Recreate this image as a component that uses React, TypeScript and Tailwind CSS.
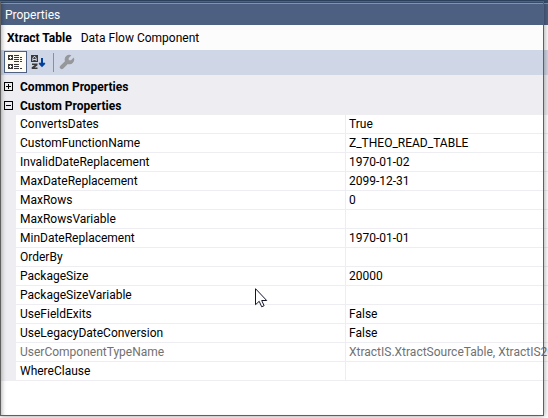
import React, { useState } from "react";

type Property = { name: string; value: string; readOnly?: boolean };

const properties: Property[] = [
  { name: "ConvertsDates", value: "True" },
  { name: "CustomFunctionName", value: "Z_THEO_READ_TABLE" },
  { name: "InvalidDateReplacement", value: "1970-01-02" },
  { name: "MaxDateReplacement", value: "2099-12-31" },
  { name: "MaxRows", value: "0" },
  { name: "MaxRowsVariable", value: "" },
  { name: "MinDateReplacement", value: "1970-01-01" },
  { name: "OrderBy", value: "" },
  { name: "PackageSize", value: "20000" },
  { name: "PackageSizeVariable", value: "" },
  { name: "UseFieldExits", value: "False" },
  { name: "UseLegacyDateConversion", value: "False" },
  { name: "UserComponentTypeName", value: "XtractIS.XtractSourceTable, XtractIS201", readOnly: true },
  { name: "WhereClause", value: "" },
];

function CategorizedIcon() {
  return (
    <svg width="16" height="16" viewBox="0 0 16 16" shapeRendering="crispEdges" aria-hidden="true">
      <path fill="#3b3a3a" d="M1 1h5v5H1zM1 10h5v5H1zM7 1h5v1H7zM7 3h5v1H7zM7 5h5v1H7zM7 7h5v1H7zM7 10h5v1H7zM7 12h5v1H7zM7 14h5v1H7zM13 3h2v1h-2zM13 5h2v1h-2zM13 7h2v1h-2zM13 14h2v1h-2z" />
      <path fill="#fffcf4" d="M3 2h1v1h1v1H4v1H3V4H2V3h1zM3 11h1v1h1v1H4v1H3v-1H2v-1h1z" />
    </svg>
  );
}

function AlphabeticalIcon() {
  return (
    <svg width="16" height="16" viewBox="0 0 16 16" aria-hidden="true">
      <path fill="#3b3a3a" d="M1 1h7v7H1z" />
      <path fill="none" stroke="#cfd6e5" d="M2.8 7V4.2L4 2.5h1L6.2 4.2V7M3 5.5h3" />
      <path fill="#3b3a3a" d="M2 9.5h5.5v1.8L4.6 13.4h2.9V15H1.7v-1.7l3-2.2H2z" />
      <path fill="none" stroke="#003f9c" strokeWidth="2" d="M12 4v8M9.3 9L12 11.8 14.7 9" />
    </svg>
  );
}

function WrenchIcon() {
  return (
    <svg width="16" height="16" viewBox="0 0 16 16" aria-hidden="true">
      <path fill="#96979b" d="M12.4 1.3A4.7 4.7 0 0 0 6 7.2L1.4 11.7a1.9 1.9 0 0 0 2.9 2.9L8.8 10a4.7 4.7 0 0 0 5.9-6.4L12 6.3 9.8 6.2 9.7 4z" />
    </svg>
  );
}

function Category({ label, open, onToggle }: { label: string; open: boolean; onToggle: () => void }) {
  return (
    <button
      type="button"
      aria-expanded={open}
      onClick={onToggle}
      className="flex h-[19px] w-full items-center gap-[7px] pl-1 text-left font-bold"
    >
      <svg width="9" height="9" viewBox="0 0 9 9" shapeRendering="crispEdges" aria-hidden="true">
        <path fill="none" stroke="#000" d={open ? "M.5.5h8v8h-8zM2 4.5h5" : "M.5.5h8v8h-8zM2 4.5h5M4.5 2v5"} />
      </svg>
      {label}
    </button>
  );
}

export default function App() {
  const [commonOpen, setCommonOpen] = useState(false);
  const [customOpen, setCustomOpen] = useState(true);

  return (
    <main className="relative min-h-screen overflow-hidden bg-white font-[Roboto,'Open_Sans',sans-serif] text-xs leading-4 text-black">
      <header className="border-t-3 border-[#364e6f] bg-[#4d6082] text-white">
        <h1 className="flex h-[22px] items-center border-t border-[#8592b0] pl-[5px]">Properties</h1>
      </header>
      <div className="flex h-[25px] items-center gap-[9px] bg-[#fcfcfc] pl-[7px]">
        <strong>Xtract Table</strong>
        <span>Data Flow Component</span>
      </div>
      <div role="toolbar" aria-label="Property view" className="flex h-[25px] items-start bg-[#cfd6e5] pt-px pl-1">
        <button type="button" aria-label="Categorized" className="flex h-[22px] w-[23px] items-center border border-[#4d6082] bg-[#fffcf4] pl-[2px]">
          <CategorizedIcon />
        </button>
        <button type="button" aria-label="Alphabetical" className="flex h-[22px] w-6 items-center pl-[3px]">
          <AlphabeticalIcon />
        </button>
        <div className="mx-[2px] mt-[2px] h-[19px] w-px bg-[#8591a8]" />
        <button type="button" aria-label="Property pages" disabled className="flex h-[22px] w-6 items-center pl-[3px]">
          <WrenchIcon />
        </button>
      </div>
      <section className="bg-[#eeeef2] pt-[2px]">
        <Category label="Common Properties" open={commonOpen} onToggle={() => setCommonOpen(!commonOpen)} />
        <Category label="Custom Properties" open={customOpen} onToggle={() => setCustomOpen(!customOpen)} />
        {customOpen && (
          <div className="pl-4">
            <table className="w-full table-fixed border-separate border-spacing-0 bg-white">
              <colgroup>
                <col className="w-[330px]" />
                <col />
              </colgroup>
              <tbody>
                {properties.map((p) => (
                  <tr key={p.name} className={p.readOnly ? "h-[19px] text-[#717171]" : "h-[19px]"}>
                    <th scope="row" className="border-r border-b border-[#eeeef2] p-0 pl-1 text-left font-normal">
                      {p.name}
                    </th>
                    <td className="border-b border-[#eeeef2] p-0 pl-[3px] whitespace-nowrap">{p.value}</td>
                  </tr>
                ))}
              </tbody>
            </table>
          </div>
        )}
      </section>
      <div className="pointer-events-none absolute inset-0 top-px right-1 bottom-[2px] border border-[#606060] shadow-[0_0_6px_rgba(0,0,0,0.4),inset_4px_0_4px_-3px_rgba(0,0,0,0.3)]" />
      <svg className="pointer-events-none absolute top-[288px] left-[255px]" width="13" height="20" viewBox="0 0 13 20" aria-hidden="true">
        <path fill="#fff" stroke="#15152a" d="M.5.7v16l3.7-3.4 2.5 5.5 2.4-1.1-2.4-5.2h5z" />
      </svg>
    </main>
  );
}
